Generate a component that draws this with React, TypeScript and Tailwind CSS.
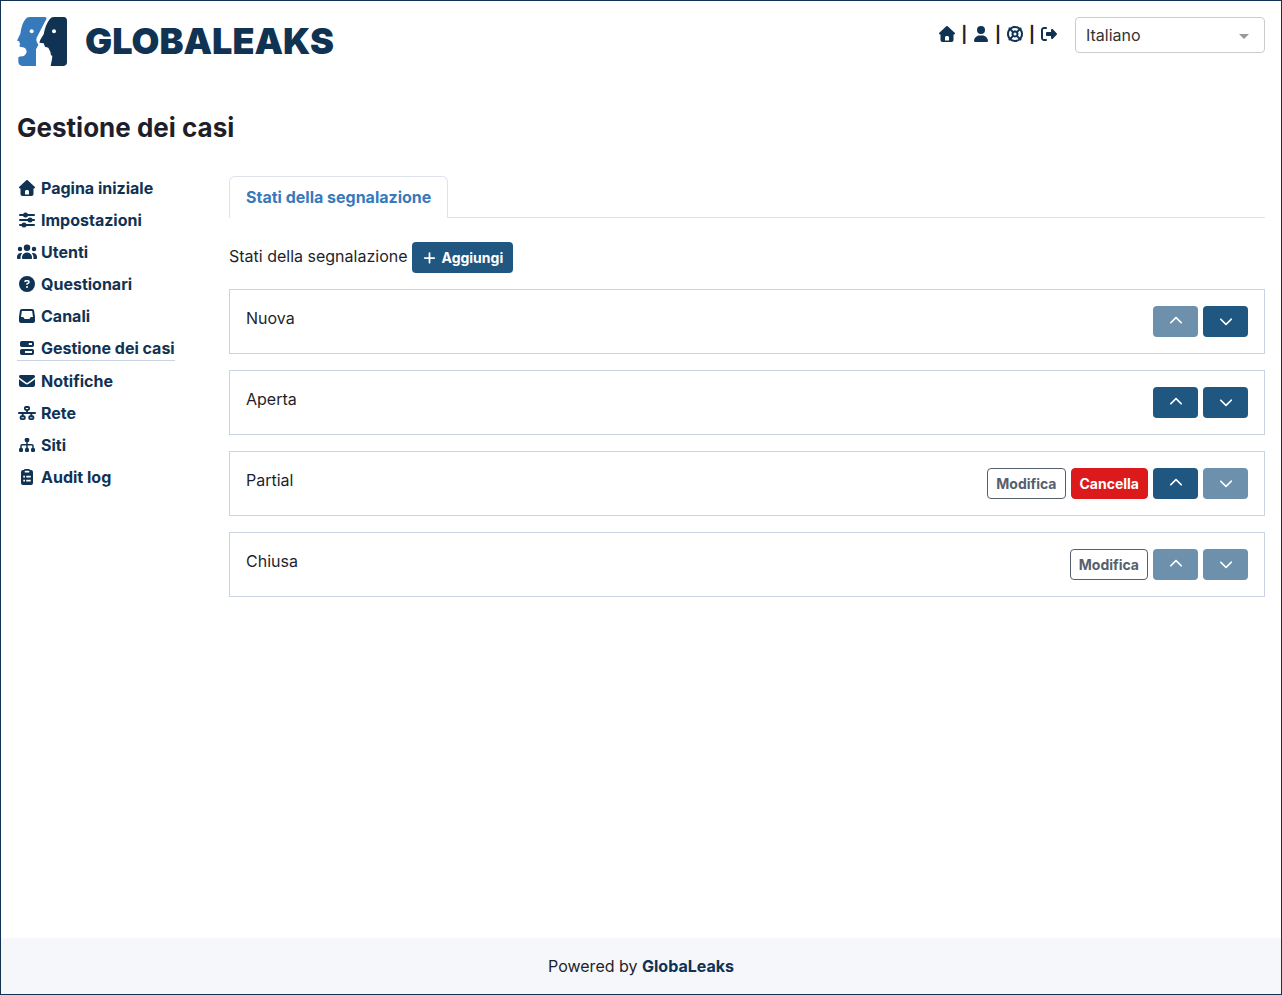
import { useState } from "react";
import type { ReactNode } from "react";
import {
  FaChevronDown,
  FaChevronUp,
  FaCircleQuestion,
  FaLifeRing,
  FaPlus,
  FaRightFromBracket,
  FaUser,
} from "react-icons/fa6";

type IconProps = { className?: string };
type Icon = (props: IconProps) => ReactNode;

function Glyph({ width = 512, className, children }: { width?: number; className?: string; children: ReactNode }) {
  return (
    <svg viewBox={`0 0 ${width} 512`} fill="currentColor" className={className} aria-hidden="true">
      {children}
    </svg>
  );
}

const HouseIcon: Icon = ({ className }) => (
  <Glyph className={className}>
    <path d="M277.8 8.6c-12.3-11.4-31.3-11.4-43.5 0l-224 208c-9.6 9-12.8 22.9-8 35.1S18.8 272 32 272l16 0 0 176c0 35.3 28.7 64 64 64l288 0c35.3 0 64-28.7 64-64l0-176 16 0c13.2 0 25-8.1 29.8-20.3s1.6-26.2-8-35.1l-224-208zM240 320l32 0c26.5 0 48 21.5 48 48l0 96-128 0 0-96c0-26.5 21.5-48 48-48z" />
  </Glyph>
);

const SlidersIcon: Icon = ({ className }) => (
  <Glyph className={className}>
    <path d="M32 96H480M32 256H480M32 416H480" stroke="currentColor" strokeWidth="64" strokeLinecap="round" />
    <circle cx="208" cy="96" r="80" />
    <circle cx="352" cy="256" r="80" />
    <circle cx="160" cy="416" r="80" />
  </Glyph>
);

const UsersIcon: Icon = ({ className }) => (
  <Glyph width={640} className={className}>
    <path d="M320 16a104 104 0 1 1 0 208 104 104 0 1 1 0-208zM96 88a72 72 0 1 1 0 144 72 72 0 1 1 0-144zM0 416c0-70.7 57.3-128 128-128 12.8 0 25.2 1.9 36.9 5.4-32.9 36.8-52.9 85.4-52.9 138.6l0 16c0 11.4 2.4 22.2 6.7 32L32 480c-17.7 0-32-14.3-32-32l0-32zm521.3 64c4.3-9.8 6.7-20.6 6.7-32l0-16c0-53.2-20-101.8-52.9-138.6 11.7-3.5 24.1-5.4 36.9-5.4 70.7 0 128 57.3 128 128l0 32c0 17.7-14.3 32-32 32l-86.7 0zM472 160a72 72 0 1 1 144 0 72 72 0 1 1 -144 0zM160 432c0-88.4 71.6-160 160-160s160 71.6 160 160l0 16c0 17.7-14.3 32-32 32l-256 0c-17.7 0-32-14.3-32-32l0-16z" />
  </Glyph>
);

const InboxIcon: Icon = ({ className }) => (
  <Glyph className={className}>
    <path d="M91.8 32C59.9 32 32.9 55.4 28.4 86.9L.6 281.2c-.4 3-.6 6-.6 9.1L0 416c0 35.3 28.7 64 64 64l384 0c35.3 0 64-28.7 64-64l0-125.7c0-3-.2-6.1-.6-9.1L483.6 86.9C479.1 55.4 452.1 32 420.2 32L91.8 32zm0 64l328.5 0 27.4 192-59.9 0c-12.1 0-23.2 6.8-28.6 17.7l-14.3 28.6c-5.4 10.8-16.5 17.7-28.6 17.7l-120.4 0c-12.1 0-23.2-6.8-28.6-17.7l-14.3-28.6c-5.4-10.8-16.5-17.7-28.6-17.7L64.4 288 91.8 96z" />
  </Glyph>
);

const ProgressIcon: Icon = ({ className }) => (
  <Glyph width={448} className={className}>
    <path
      fillRule="evenodd"
      d="M56 32H392a56 56 0 0 1 56 56V168a56 56 0 0 1-56 56H56a56 56 0 0 1-56-56V88a56 56 0 0 1 56-56ZM280 96V160H384V96ZM56 288H392a56 56 0 0 1 56 56V424a56 56 0 0 1-56 56H56a56 56 0 0 1-56-56V344a56 56 0 0 1 56-56ZM160 352V416H384V352Z"
    />
  </Glyph>
);

const EnvelopeIcon: Icon = ({ className }) => (
  <Glyph className={className}>
    <path d="M48 64c-26.5 0-48 21.5-48 48 0 15.1 7.1 29.3 19.2 38.4l208 156c17.1 12.8 40.5 12.8 57.6 0l208-156c12.1-9.1 19.2-23.3 19.2-38.4 0-26.5-21.5-48-48-48L48 64zM0 196L0 384c0 35.3 28.7 64 64 64l384 0c35.3 0 64-28.7 64-64l0-188-198.4 148.8c-34.1 25.6-81.1 25.6-115.2 0L0 196z" />
  </Glyph>
);

const NetworkIcon: Icon = ({ className }) => (
  <Glyph width={576} className={className}>
    <g fill="none" stroke="currentColor" strokeWidth="60" strokeLinecap="round">
      <rect x="222" y="62" width="132" height="92" rx="28" />
      <rect x="84" y="358" width="132" height="92" rx="28" />
      <rect x="360" y="358" width="132" height="92" rx="28" />
      <path d="M30 256H546M288 154V256M150 256V358M426 256V358" />
    </g>
  </Glyph>
);

const SitemapIcon: Icon = ({ className }) => (
  <Glyph className={className}>
    <rect x="184" y="32" width="144" height="128" rx="40" />
    <rect x="0" y="352" width="128" height="128" rx="40" />
    <rect x="192" y="352" width="128" height="128" rx="40" />
    <rect x="384" y="352" width="128" height="128" rx="40" />
    <path
      d="M256 150V360M64 360V288Q64 248 104 248H408Q448 248 448 288V360"
      fill="none"
      stroke="currentColor"
      strokeWidth="48"
    />
  </Glyph>
);

const ClipboardIcon: Icon = ({ className }) => (
  <Glyph width={384} className={className}>
    <path
      fillRule="evenodd"
      d="M144 0H240Q282 0 294 32H320a64 64 0 0 1 64 64V448a64 64 0 0 1-64 64H64a64 64 0 0 1-64-64V96a64 64 0 0 1 64-64H90Q102 0 144 0ZM144 56a28 28 0 0 0 0 56H240a28 28 0 0 0 0-56ZM72 216V272H128V216ZM168 216V272H312V216ZM72 344V400H128V344ZM168 344V400H312V344Z"
    />
  </Glyph>
);

const topLinks: { label: string; icon: Icon }[] = [
  { label: "Pagina iniziale", icon: HouseIcon },
  { label: "Preferenze", icon: FaUser },
  { label: "Supporto", icon: FaLifeRing },
  { label: "Esci", icon: FaRightFromBracket },
];

const menu: { label: string; icon: Icon; active?: boolean }[] = [
  { label: "Pagina iniziale", icon: HouseIcon },
  { label: "Impostazioni", icon: SlidersIcon },
  { label: "Utenti", icon: UsersIcon },
  { label: "Questionari", icon: FaCircleQuestion },
  { label: "Canali", icon: InboxIcon },
  { label: "Gestione dei casi", icon: ProgressIcon, active: true },
  { label: "Notifiche", icon: EnvelopeIcon },
  { label: "Rete", icon: NetworkIcon },
  { label: "Siti", icon: SitemapIcon },
  { label: "Audit log", icon: ClipboardIcon },
];

const statuses = [
  { name: "Nuova", edit: false, remove: false, up: false, down: true },
  { name: "Aperta", edit: false, remove: false, up: true, down: true },
  { name: "Partial", edit: true, remove: true, up: true, down: false },
  { name: "Chiusa", edit: true, remove: false, up: false, down: false },
];

function Logo() {
  return (
    <a href="#" className="flex items-center gap-[18px] text-[#103253]">
      <svg viewBox="0 0 150 147" className="h-[49px] w-[50px]" aria-hidden="true">
        <path
          fill="#377abc"
          d="M36 0H83Q90 1 88 7L83 16L59 62Q56 70 60 76L64 84L57 97V147H16Q5 145 4 134V121Q10 117 18 118Q28 114 29 103Q27 93 18 91L8 89L8 83L10 80L7 77V73L0 71L10 50Q14 20 24 8Q29 1 36 0Z"
        />
        <path
          fill="#103253"
          d="M110 0H140Q150 1 150 11V136Q150 146 140 147H101L105 126L106 116L102 115L100 104L94 92L84 89L80 79L67 77L70 68L80 52Q86 22 98 7Q103 0 110 0Z"
        />
        <circle cx="44" cy="43" r="6" fill="#fff" />
        <circle cx="111" cy="43" r="6" fill="#fff" />
      </svg>
      <span className="text-4xl leading-[49px] font-black">GLOBALEAKS</span>
    </a>
  );
}

function MoveButton({ label, icon: Icon, enabled }: { label: string; icon: Icon; enabled: boolean }) {
  return (
    <button
      type="button"
      aria-label={label}
      disabled={!enabled}
      className="flex h-[31px] w-[45px] items-center justify-center rounded-sm bg-[#205781] pb-0.5 text-white disabled:opacity-65"
    >
      <Icon className="size-3.5" />
    </button>
  );
}

export default function App() {
  const [language, setLanguage] = useState("Italiano");

  return (
    <div className="flex min-h-screen flex-col border border-[#103253] bg-white font-['Inter',sans-serif] text-base text-[#1f1f2b]">
      <header className="flex items-start justify-between p-4">
        <Logo />
        <div className="flex items-start gap-4">
          <nav className="flex items-center gap-1 pt-[5px] font-bold">
            {topLinks.map(({ label, icon: Icon }, i) => (
              <div key={label} className="flex items-center gap-1">
                {i > 0 && <span>|</span>}
                <a href="#" aria-label={label} className="text-[#103253]">
                  <Icon className="h-4 w-5" />
                </a>
              </div>
            ))}
          </nav>
          <div className="relative">
            <select
              aria-label="Lingua"
              value={language}
              onChange={(e) => setLanguage(e.target.value)}
              className="h-9 w-[190px] appearance-none rounded-sm border border-[#ccc] bg-white px-2.5 text-[#333]"
            >
              <option>Italiano</option>
              <option>English</option>
            </select>
            <svg
              viewBox="0 0 10 5"
              className="pointer-events-none absolute top-4 right-4 mt-px h-[5px] w-2.5 fill-[#999]"
              aria-hidden="true"
            >
              <path d="M0 0H10L5 5Z" />
            </svg>
          </div>
        </div>
      </header>

      <h1 className="mt-[30px] px-4 text-[26px] leading-8 font-bold">Gestione dei casi</h1>

      <div className="flex grow px-4 pt-8">
        <nav className="-mt-1 w-[212px] shrink-0">
          <ul>
            {menu.map(({ label, icon: Icon, active }) => (
              <li key={label} className="flex py-1">
                <a
                  href="#"
                  className={`flex items-center gap-1 font-bold text-[#103253] ${active ? "border-b border-[#c8d3e3]" : ""}`}
                >
                  <Icon className="h-4 w-5" />
                  {label}
                </a>
              </li>
            ))}
          </ul>
        </nav>

        <main className="grow">
          <div className="flex">
            <button
              type="button"
              className="rounded-t-md border border-b-0 border-[#dee2ec] px-4 py-2 leading-[25px] font-bold text-[#377abc]"
            >
              Stati della segnalazione
            </button>
            <div className="grow border-b border-[#dee2ec]" />
          </div>

          <div className="mt-6 flex items-start gap-1">
            <span className="leading-7">Stati della segnalazione</span>
            <button
              type="button"
              className="flex h-[31px] items-center gap-1 rounded-sm bg-[#205781] pr-2.5 pl-[9px] text-sm font-bold text-white"
            >
              <FaPlus className="h-3.5 w-[17px]" />
              Aggiungi
            </button>
          </div>

          <div className="mt-4 flex flex-col gap-4">
            {statuses.map((s) => (
              <div key={s.name} className="flex items-start justify-between border border-[#c8d3e3] p-4">
                <span>{s.name}</span>
                <div className="flex gap-[5px]">
                  {s.edit && (
                    <button
                      type="button"
                      className="h-[31px] rounded-sm border border-[#565f6e] px-2 text-sm font-bold text-[#565f6e]"
                    >
                      Modifica
                    </button>
                  )}
                  {s.remove && (
                    <button
                      type="button"
                      className="h-[31px] rounded-sm border border-[#dc1a1b] bg-[#dc1a1b] px-2 text-sm font-bold text-white"
                    >
                      Cancella
                    </button>
                  )}
                  <MoveButton label={`Sposta su ${s.name}`} icon={FaChevronUp} enabled={s.up} />
                  <MoveButton label={`Sposta giù ${s.name}`} icon={FaChevronDown} enabled={s.down} />
                </div>
              </div>
            ))}
          </div>
        </main>
      </div>

      <footer className="bg-[#f5f7fb] py-4 text-center">
        Powered by{" "}
        <a href="#" className="font-bold text-[#103253]">
          GlobaLeaks
        </a>
      </footer>
    </div>
  );
}
